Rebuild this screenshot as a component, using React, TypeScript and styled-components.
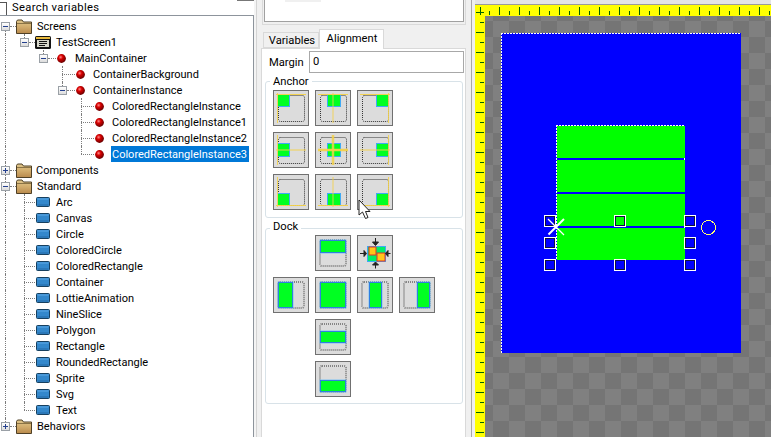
import React from "react";
import styled, { createGlobalStyle } from "styled-components";

const GlobalStyle = createGlobalStyle`
  html, body {
    margin: 0;
    padding: 0;
    background: #f0f0f0;
    overflow: hidden;
  }
`;

const Window = styled.div`
  position: relative;
  display: flex;
  width: 771px;
  height: 437px;
  overflow: hidden;
  background: #f0f0f0;
  font-family: "Roboto", "Liberation Sans", sans-serif;
  font-size: 11.2px;
  color: #000;
`;

/* ---------- left: variables tree ---------- */

const TreePane = styled.div`
  flex: none;
  width: 254px;
  height: 437px;
  display: flex;
  flex-direction: column;
`;

const SearchRow = styled.div`
  position: relative;
  flex: none;
  height: 15px;
  display: flex;
  align-items: center;
  background: #fff;
  overflow: hidden;
`;

const SearchBox = styled.span`
  flex: none;
  width: 11px;
  height: 12px;
  margin-left: -6px;
  margin-top: 2px;
  border: 1px solid #555;
  background: #fff;
`;

const SearchLabel = styled.span`
  margin-left: 5px;
  line-height: 15px;
  letter-spacing: 0.35px;
`;

const TopEdge = styled.span`
  position: absolute;
  top: 0;
  right: 0;
  width: 17px;
  height: 1px;
  background: #777;
`;

const TreeBox = styled.div`
  flex: 1;
  padding-top: 2px;
  background: #fff;
  border-top: 1px solid #8d949c;
  border-right: 1px solid #8d949c;
  overflow: hidden;
`;

const Row = styled.div<{ $icon: number }>`
  position: relative;
  height: 16px;
  display: flex;
  align-items: center;
  padding-left: ${(p) => p.$icon}px;
`;

const Glyph = styled.span<{ $width: number }>`
  flex: none;
  width: ${(p) => p.$width}px;
  display: flex;
  align-items: center;
`;

const Label = styled.span<{ $selected?: boolean }>`
  font-size: 11px;
  line-height: 15px;
  padding: 1px 2px 0 1px;
  margin-left: -1px;
  white-space: nowrap;
  background: ${(p) => (p.$selected ? "#0078d7" : "transparent")};
  color: ${(p) => (p.$selected ? "#fff" : "#000")};
`;

const Guide = styled.span<{ $x: number; $part: "full" | "up" | "down" }>`
  position: absolute;
  left: ${(p) => p.$x}px;
  top: ${(p) => (p.$part === "down" ? 8 : 0)}px;
  height: ${(p) => (p.$part === "full" ? 16 : 8)}px;
  border-left: 1px dotted #7d7d7d;
`;

const Elbow = styled.span<{ $x: number; $width: number }>`
  position: absolute;
  left: ${(p) => p.$x}px;
  top: 8px;
  width: ${(p) => p.$width}px;
  border-top: 1px dotted #7d7d7d;
`;

const Expander = styled.span<{ $x: number; $open: boolean }>`
  position: absolute;
  left: ${(p) => p.$x}px;
  top: 4px;
  width: 9px;
  height: 9px;
  box-sizing: border-box;
  border: 1px solid #9aa0a6;
  background: linear-gradient(#fff, #dcdcdc);

  &::before {
    content: "";
    position: absolute;
    left: 1px;
    top: 3px;
    width: 5px;
    height: 1px;
    background: #24408e;
  }

  &::after {
    content: "";
    display: ${(p) => (p.$open ? "none" : "block")};
    position: absolute;
    left: 3px;
    top: 1px;
    width: 1px;
    height: 5px;
    background: #24408e;
  }
`;

const FolderIcon = () => (
  <svg width="16" height="15" viewBox="0 0 16 15">
    <defs>
      <linearGradient id="folderBody" x1="0" y1="0" x2="0" y2="1">
        <stop offset="0" stopColor="#e0c78c" />
        <stop offset="0.45" stopColor="#d4b070" />
        <stop offset="1" stopColor="#b98a4c" />
      </linearGradient>
    </defs>
    <path d="M0.5 2.5 L1.5 1 H6 L7.5 3 H15.5 V14.5 H0.5 Z" fill="url(#folderBody)" stroke="#4f4026" />
    <path d="M1 4.5 H15" stroke="#8a7345" />
  </svg>
);

const ScreenIcon = () => (
  <svg width="16" height="13" viewBox="0 0 16 13">
    <rect x="0" y="0" width="16" height="13" rx="1.5" fill="#141414" />
    <rect x="1" y="1" width="14" height="2" fill="#e8b93c" />
    <rect x="2" y="4" width="12" height="7" fill="#d8d8cc" />
    <path d="M4 5.5 H12 M4 7.5 H12 M4 9.5 H10" stroke="#111" />
  </svg>
);

const BulletIcon = () => (
  <svg width="9" height="9" viewBox="0 0 9 9">
    <defs>
      <radialGradient id="bulletFill" cx="0.4" cy="0.35" r="0.7">
        <stop offset="0" stopColor="#ff8a8a" />
        <stop offset="0.35" stopColor="#d80000" />
        <stop offset="1" stopColor="#5a0000" />
      </radialGradient>
    </defs>
    <circle cx="4.5" cy="4.5" r="4.4" fill="url(#bulletFill)" />
  </svg>
);

const ElementIcon = () => (
  <svg width="14" height="10" viewBox="0 0 14 10">
    <rect x="0.5" y="0.5" width="13" height="9" rx="1" fill="#3388cc" stroke="#17405f" />
    <path d="M1.5 2 H12.5" stroke="#5ea9e6" />
    <path d="M1.5 8 H12.5" stroke="#2468a4" />
  </svg>
);

type Part = "full" | "up" | "down";
type Kind = "folder" | "screen" | "bullet" | "element";

type Node = {
  label: string;
  kind: Kind;
  icon: number;
  text: number;
  box?: [number, boolean];
  guides: [number, Part][];
  elbow: [number, number];
  selected?: boolean;
};

const ROOT: [number, Part] = [5, "full"];

const element = (label: string, last?: boolean): Node => ({
  label,
  kind: "element",
  icon: 36,
  text: 56,
  guides: [ROOT, [24, last ? "up" : "full"]],
  elbow: [24, 11],
});

const instance = (label: string, last?: boolean, selected?: boolean): Node => ({
  label,
  kind: "bullet",
  icon: 95,
  text: 112,
  guides: [ROOT, [81, last ? "up" : "full"]],
  elbow: [81, 13],
  selected,
});

const nodes: Node[] = [
  { label: "Screens", kind: "folder", icon: 16, text: 37, box: [1, true], guides: [[5, "down"]], elbow: [10, 6] },
  { label: "TestScreen1", kind: "screen", icon: 35, text: 56, box: [20, true], guides: [ROOT, [24, "up"]], elbow: [29, 6] },
  { label: "MainContainer", kind: "bullet", icon: 57, text: 75, box: [39, true], guides: [ROOT, [43, "up"]], elbow: [48, 8] },
  { label: "ContainerBackground", kind: "bullet", icon: 76, text: 93, guides: [ROOT, [62, "full"]], elbow: [62, 13] },
  { label: "ContainerInstance", kind: "bullet", icon: 76, text: 93, box: [58, true], guides: [ROOT, [62, "up"]], elbow: [67, 8] },
  instance("ColoredRectangleInstance"),
  instance("ColoredRectangleInstance1"),
  instance("ColoredRectangleInstance2"),
  instance("ColoredRectangleInstance3", true, true),
  { label: "Components", kind: "folder", icon: 16, text: 36, box: [1, false], guides: [ROOT], elbow: [10, 6] },
  { label: "Standard", kind: "folder", icon: 16, text: 37, box: [1, true], guides: [ROOT], elbow: [10, 6] },
  element("Arc"),
  element("Canvas"),
  element("Circle"),
  element("ColoredCircle"),
  element("ColoredRectangle"),
  element("Container"),
  element("LottieAnimation"),
  element("NineSlice"),
  element("Polygon"),
  element("Rectangle"),
  element("RoundedRectangle"),
  element("Sprite"),
  element("Svg"),
  element("Text", true),
  { label: "Behaviors", kind: "folder", icon: 16, text: 37, box: [1, false], guides: [[5, "up"]], elbow: [10, 6] },
];

const iconFor = (kind: Kind) => {
  if (kind === "folder") return <FolderIcon />;
  if (kind === "screen") return <ScreenIcon />;
  if (kind === "bullet") return <BulletIcon />;
  return <ElementIcon />;
};

/* ---------- middle: alignment tab ---------- */

const Gutter = styled.div`
  flex: none;
  width: 3px;
  box-sizing: border-box;
  border-right: 1px solid #d4d4d4;
  margin-right: 4px;
  background: #f4f4f4;
`;

const MiddlePane = styled.div`
  flex: none;
  width: 205px;
  height: 437px;
  display: flex;
  flex-direction: column;
`;

const PreviewFrame = styled.div`
  flex: none;
  margin-left: 1px;
  height: 25px;
  box-sizing: border-box;
  padding: 0 1px 2px;
  border: 1px solid #dadada;
  border-top: none;
`;

const Preview = styled.div`
  height: 22px;
  box-sizing: border-box;
  background: #fff;
  border: 1px solid #a0a0a0;
  border-top: none;
  padding-left: 20px;
`;

const PreviewStub = styled.div`
  width: 36px;
  height: 2px;
  background: #f0f0f0;
`;

const TabStrip = styled.div`
  flex: none;
  height: 23px;
  padding-left: 2px;
  display: flex;
  align-items: flex-end;
`;

const Tab = styled.div<{ $active?: boolean }>`
  box-sizing: border-box;
  width: ${(p) => (p.$active ? 65 : 56)}px;
  height: ${(p) => (p.$active ? 20 : 16)}px;
  margin-bottom: ${(p) => (p.$active ? -1 : 0)}px;
  padding-left: ${(p) => (p.$active ? 1 : 2)}px;
  position: relative;
  z-index: ${(p) => (p.$active ? 1 : 0)};
  border: 1px solid #d9d9d9;
  border-bottom: ${(p) => (p.$active ? "none" : "1px solid #d9d9d9")};
  background: ${(p) => (p.$active ? "#fff" : "#f0f0f0")};
  text-align: center;
  line-height: ${(p) => (p.$active ? 18 : 15)}px;
`;

const TabPanel = styled.div`
  flex: 1;
  box-sizing: border-box;
  background: #fff;
  border: 1px solid #d9d9d9;
  border-bottom: none;
  padding: 2px 2px 0 3px;
`;

const MarginRow = styled.div`
  height: 22px;
  display: flex;
  align-items: center;
  padding-left: 4px;
`;

const MarginLabel = styled.span`
  flex: none;
  width: 40px;
`;

const MarginInput = styled.div`
  flex: 1;
  height: 22px;
  margin-right: -1px;
  box-sizing: border-box;
  border: 1px solid #a8a8a8;
  padding-left: 3px;
  line-height: 20px;
`;

const Group = styled.fieldset`
  margin: 0;
  padding: 1px 0 0 7px;
  min-width: 0;
  border: 1px solid #d8e2e8;
  border-radius: 3px;
`;

const AnchorGroup = styled(Group)`
  height: 145px;
  box-sizing: border-box;
`;

const DockGroup = styled(Group)`
  height: 186px;
  box-sizing: border-box;
  padding-top: 0;
`;

const Legend = styled.legend<{ $tail?: number }>`
  margin-left: -3px;
  padding: 1px 3px ${(p) => p.$tail ?? 0}px;
  line-height: 15px;
`;

const ButtonGrid = styled.div<{ $lift?: number }>`
  display: grid;
  grid-template-columns: repeat(4, 36px);
  grid-auto-rows: 36px;
  gap: 6px;
  margin-top: ${(p) => p.$lift ?? 0}px;
`;

const IconButton = styled.div<{ $col: number; $row: number }>`
  position: relative;
  grid-column: ${(p) => p.$col};
  grid-row: ${(p) => p.$row};
  background: #dcdcdc;
  box-shadow: inset 0 0 0 1px #707070;
`;

const ButtonArt = styled.svg`
  display: block;
  width: 36px;
  height: 36px;
`;

const spanX = [
  [5, 16],
  [13, 25],
  [20, 31],
];
const spanY = [
  [5, 16],
  [12, 24],
  [20, 31],
];
const blueX = [
  [5, 17],
  [12, 26],
  [19, 31],
];
const blueY = [
  [5, 17],
  [11, 25],
  [19, 31],
];
const lineAt = [4.5, 18, 31.5];

const AnchorArt = ({ h, v }: { h: number; v: number }) => {
  const center = h === 1 && v === 1;
  return (
    <ButtonArt viewBox="0 0 36 36">
      <rect x="5.5" y="5.5" width="26" height="26" rx="2" fill="none" stroke="#333" strokeDasharray="1 1" />
      <rect x={blueX[h][0]} y={blueY[v][0]} width={blueX[h][1] - blueX[h][0]} height={blueY[v][1] - blueY[v][0]} fill="#3fa9f5" />
      <rect x={spanX[h][0]} y={spanY[v][0]} width={spanX[h][1] - spanX[h][0]} height={spanY[v][1] - spanY[v][0]} fill="#00ff22" />
      <path d={`M${lineAt[h]} 3 V33`} stroke="#f4d24a" strokeWidth={center ? 2.5 : 1} opacity={0.85} />
      <path d={`M3 ${lineAt[v]} H33`} stroke="#f4d24a" strokeWidth={center ? 2.5 : 1} opacity={0.95} />
    </ButtonArt>
  );
};

const DockArt = ({ x0, y0, x1, y1 }: { x0: number; y0: number; x1: number; y1: number }) => (
  <ButtonArt viewBox="0 0 36 36">
    <rect x="5" y="5" width="26" height="26" rx="2" fill="none" stroke="#858585" strokeWidth="2" strokeDasharray="1 1" />
    <rect x={x0 - 1.5} y={y0 - 1.5} width={x1 - x0 + 3} height={y1 - y0 + 3} fill="#7cc2f4" />
    <rect x={x0 - 0.5} y={y0 - 0.5} width={x1 - x0 + 1} height={y1 - y0 + 1} fill="#00ff22" stroke="#2f7fe0" />
  </ButtonArt>
);

const SizeToChildrenArt = () => (
  <ButtonArt viewBox="0 0 36 36">
    <rect x="10.5" y="11.5" width="18" height="15" fill="#00ee66" stroke="#3fa9f5" />
    <rect x="12" y="12" width="7" height="8" fill="#ffc61a" stroke="#e0302a" />
    <rect x="20" y="18" width="8" height="8" fill="#ffc61a" stroke="#e0302a" />
    <path d="M18.5 3 V8 M15.5 7 H21.5 L18.5 10.5 Z" fill="#222" stroke="#222" />
    <path d="M18.5 33.5 V29 M15.5 30 H21.5 L18.5 27 Z" fill="#222" stroke="#222" />
    <path d="M3 18.5 H7 M7 15.5 V21.5 L9.5 18.5 Z" fill="#222" stroke="#222" />
    <path d="M33.5 18.5 H30 M31 15.5 V21.5 L28.5 18.5 Z" fill="#222" stroke="#222" />
  </ButtonArt>
);

const PointerCursor = styled.svg`
  position: absolute;
  left: 358px;
  top: 199px;
  z-index: 3;
`;

/* ---------- right: design surface ---------- */

const StagePane = styled.div`
  flex: 1;
  min-width: 0;
  margin-left: 5px;
  height: 437px;
  box-sizing: border-box;
  padding-left: 3px;
  border-left: 1px solid #a8a8a8;
  display: flex;
  flex-direction: column;
`;

const StageTop = styled.div`
  flex: none;
  height: 5px;
  box-sizing: border-box;
  background: #e4e4e4;
  border-bottom: 1px solid #9a9a9a;
`;

const RulerRow = styled.div`
  flex: none;
  display: flex;
  height: 11px;
  background: #ffff00;
`;

const StageBody = styled.div`
  flex: 1;
  min-height: 0;
  display: flex;
`;

const SideRuler = styled.svg`
  flex: none;
  display: block;
  background: #ffff00;
`;

const TopRuler = styled.svg`
  display: block;
`;

const Canvas = styled.div`
  position: relative;
  flex: 1;
  overflow: hidden;
  background: repeating-conic-gradient(#757575 0 25%, #808080 0 50%) 8px 5px / 32px 32px;
`;

const ScreenArea = styled.div`
  position: absolute;
  left: 16px;
  top: 17px;
  width: 240px;
  height: 320px;
  background: #0000ff;
`;

const DashEdge = styled.div<{ $x: number; $y: number; $w: number; $h: number }>`
  position: absolute;
  left: ${(p) => p.$x}px;
  top: ${(p) => p.$y}px;
  width: ${(p) => p.$w}px;
  height: ${(p) => p.$h}px;
  background: repeating-linear-gradient(
    ${(p) => (p.$w > p.$h ? "90deg" : "180deg")},
    #fff 0 2px,
    transparent 2px 3px
  );
`;

const Stack = styled.div`
  position: absolute;
  left: 56px;
  top: 93px;
  width: 128px;
  display: flex;
  flex-direction: column;
  gap: 2px;
`;

const Band = styled.div`
  height: 32px;
  background: #00ff00;
`;

const Handle = styled.span<{ $x: number; $y: number }>`
  position: absolute;
  left: ${(p) => p.$x - 485}px;
  top: ${(p) => p.$y - 16}px;
  width: 12px;
  height: 12px;
  box-sizing: border-box;
  border: 1px solid #fff;
  box-shadow: inset 0 0 0 1px #101040;
`;

const OriginMark = styled.svg`
  position: absolute;
  left: 62px;
  top: 202px;
`;

const RotateMark = styled.svg`
  position: absolute;
  left: 215px;
  top: 203px;
`;

const handles = [
  [544, 215],
  [614, 215],
  [684, 215],
  [544, 237],
  [684, 237],
  [544, 259],
  [614, 259],
  [684, 259],
];

const TICK = "#006400";

export default function App() {
  const topTicks = Array.from({ length: 29 }, (_, i) => 14 + i * 10);
  const sideTicks = Array.from({ length: 42 }, (_, i) => 6 + i * 10);

  return (
    <Window>
      <GlobalStyle />

      <TreePane>
        <SearchRow>
          <SearchBox />
          <SearchLabel>Search variables</SearchLabel>
          <TopEdge />
        </SearchRow>
        <TreeBox>
          {nodes.map((n) => (
            <Row key={n.label} $icon={n.icon}>
              {n.guides.map(([x, part]) => (
                <Guide key={x} $x={x} $part={part} />
              ))}
              <Elbow $x={n.elbow[0]} $width={n.elbow[1]} />
              {n.box && <Expander $x={n.box[0]} $open={n.box[1]} />}
              <Glyph $width={n.text - n.icon}>{iconFor(n.kind)}</Glyph>
              <Label $selected={n.selected}>{n.label}</Label>
            </Row>
          ))}
        </TreeBox>
      </TreePane>

      <Gutter />

      <MiddlePane>
        <PreviewFrame>
          <Preview>
            <PreviewStub />
          </Preview>
        </PreviewFrame>
        <TabStrip>
          <Tab>Variables</Tab>
          <Tab $active>Alignment</Tab>
        </TabStrip>
        <TabPanel>
          <MarginRow>
            <MarginLabel>Margin</MarginLabel>
            <MarginInput>0</MarginInput>
          </MarginRow>
          <AnchorGroup>
            <Legend>Anchor</Legend>
            <ButtonGrid>
              {[0, 1, 2].map((v) =>
                [0, 1, 2].map((h) => (
                  <IconButton key={`${h}-${v}`} $col={h + 1} $row={v + 1}>
                    <AnchorArt h={h} v={v} />
                  </IconButton>
                ))
              )}
            </ButtonGrid>
          </AnchorGroup>
          <DockGroup>
            <Legend $tail={4}>Dock</Legend>
            <ButtonGrid $lift={-3}>
              <IconButton $col={2} $row={1}>
                <DockArt x0={6} y0={6} x1={30} y1={17} />
              </IconButton>
              <IconButton $col={3} $row={1}>
                <SizeToChildrenArt />
              </IconButton>
              <IconButton $col={1} $row={2}>
                <DockArt x0={6} y0={6} x1={19} y1={30} />
              </IconButton>
              <IconButton $col={2} $row={2}>
                <DockArt x0={6} y0={6} x1={30} y1={30} />
              </IconButton>
              <IconButton $col={3} $row={2}>
                <DockArt x0={13} y0={6} x1={24} y1={30} />
              </IconButton>
              <IconButton $col={4} $row={2}>
                <DockArt x0={19} y0={6} x1={30} y1={30} />
              </IconButton>
              <IconButton $col={2} $row={3}>
                <DockArt x0={6} y0={13} x1={30} y1={23} />
              </IconButton>
              <IconButton $col={2} $row={4}>
                <DockArt x0={6} y0={20} x1={30} y1={30} />
              </IconButton>
            </ButtonGrid>
          </DockGroup>
        </TabPanel>
      </MiddlePane>

      <StagePane>
        <StageTop />
        <RulerRow>
          <TopRuler width="296" height="11" viewBox="0 0 296 11" shapeRendering="crispEdges">
            <path d="M1 7.5 H9 M5.5 2 V10" stroke={TICK} fill="none" />
            {topTicks.map((x, i) => (
              <path key={x} d={`M${x + 0.5} ${i % 2 ? 2 : 6} V10`} stroke={TICK} />
            ))}
          </TopRuler>
        </RulerRow>
        <StageBody>
          <SideRuler width="10" height="421" viewBox="0 0 10 421" shapeRendering="crispEdges">
            {sideTicks.map((y, i) => (
              <path key={y} d={`M${i % 2 ? 1 : 5} ${y + 0.5} H9`} stroke={TICK} />
            ))}
          </SideRuler>
          <Canvas>
            <ScreenArea>
              <DashEdge $x={0} $y={0} $w={240} $h={1} />
              <DashEdge $x={0} $y={0} $w={1} $h={320} />
              <Stack>
                <Band />
                <Band />
                <Band />
                <Band />
              </Stack>
            </ScreenArea>
            <DashEdge $x={71} $y={109} $w={128} $h={1} />
            <DashEdge $x={71} $y={109} $w={1} $h={135} />
            <DashEdge $x={199} $y={142} $w={1} $h={2} />
            <DashEdge $x={199} $y={210} $w={1} $h={2} />
            {handles.map(([x, y]) => (
              <Handle key={`${x}-${y}`} $x={x} $y={y} />
            ))}
            <OriginMark width="18" height="18" viewBox="0 0 18 18">
              <path d="M1 1 L17 17" stroke="#fff" strokeWidth="1.2" />
              <path d="M1.5 16.5 L17 1" stroke="#fff" strokeWidth="2" />
            </OriginMark>
            <RotateMark width="17" height="17" viewBox="0 0 17 17" shapeRendering="crispEdges">
              <circle cx="8.5" cy="8.5" r="7" fill="none" stroke="#ffff70" />
            </RotateMark>
          </Canvas>
        </StageBody>
      </StagePane>

      <PointerCursor width="15" height="21" viewBox="0 0 15 21">
        <path d="M1 1 V16 L4.5 13 L7.5 19.5 L10 18.5 L7.5 12.5 H12 Z" fill="#fff" stroke="#222" />
      </PointerCursor>
    </Window>
  );
}
